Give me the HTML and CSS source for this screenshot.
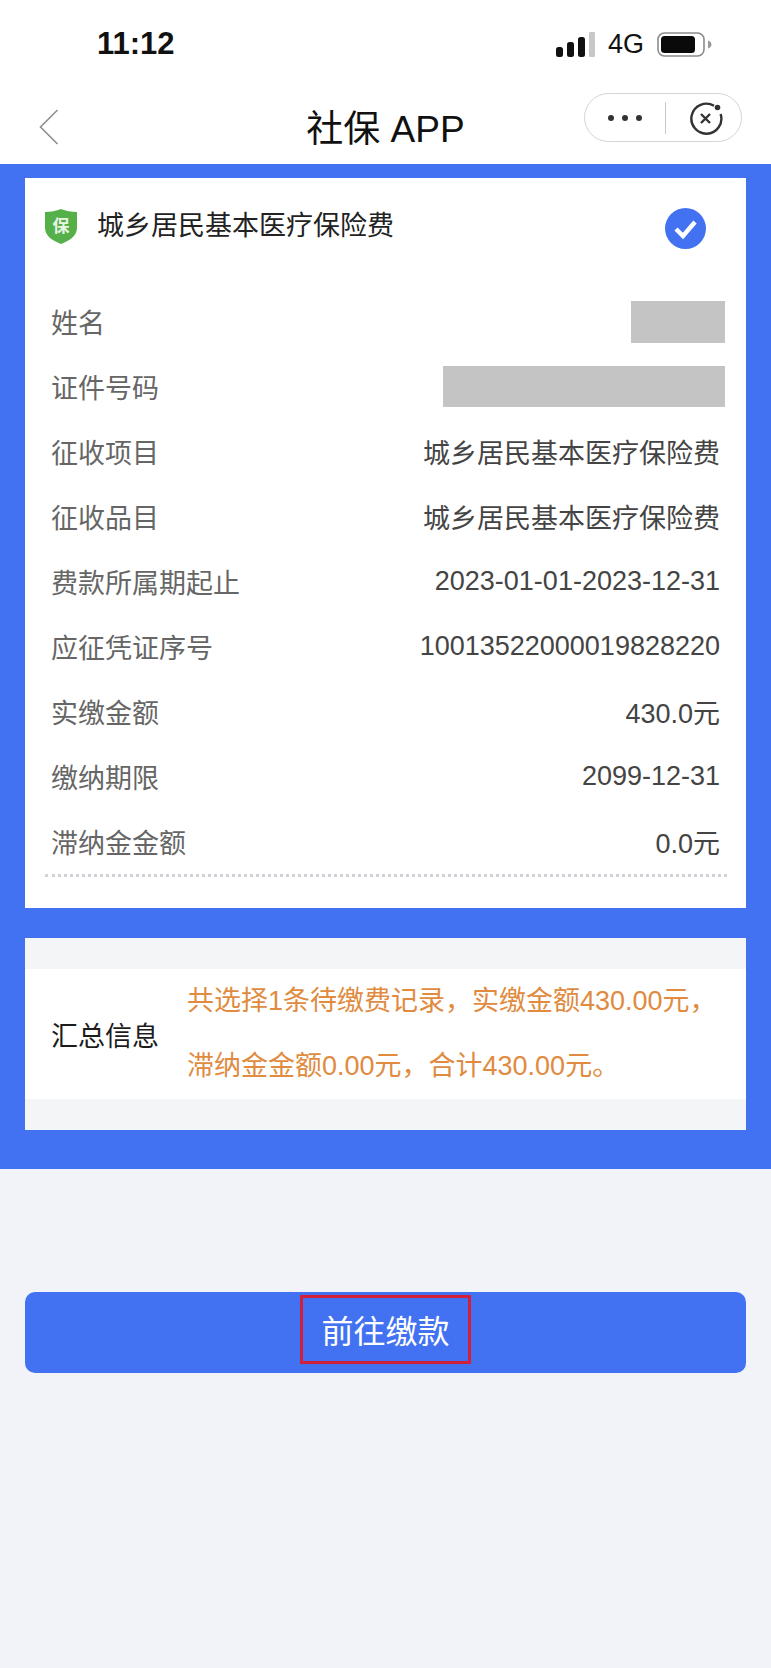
FILE: index.html
```html
<!DOCTYPE html>
<html lang="zh-CN">
<head>
    <meta charset="UTF-8">
    <meta name="viewport" content="width=device-width, initial-scale=1.0">
    <title>社保 APP</title>
    <link rel="stylesheet" href="styles.css">
</head>
<body>
    <div class="status-bar">
        <span class="time">11:12</span>
        <div class="status-right">
            <svg class="signal" width="39" height="25" viewBox="0 0 39 25">
                <rect x="0" y="15" width="7" height="10" rx="2.5" fill="#111"/>
                <rect x="11" y="10" width="7" height="15" rx="2.5" fill="#111"/>
                <rect x="22" y="5" width="7" height="20" rx="2.5" fill="#111"/>
                <rect x="33" y="0" width="6" height="25" rx="1" fill="#c8c8c8"/>
            </svg>
            <span class="network">4G</span>
            <svg class="battery" width="55" height="25" viewBox="0 0 55 25">
                <rect x="1" y="1" width="46" height="23" rx="6.5" fill="none" stroke="#8c8c8c" stroke-width="1.6"/>
                <rect x="4" y="4" width="34" height="17" rx="3.5" fill="#0a0a0a"/>
                <path d="M51 8.5 C53.5 9.5 54.5 11 54.5 12.5 C54.5 14 53.5 15.5 51 16.5 Z" fill="#999"/>
            </svg>
        </div>
    </div>

    <div class="nav-bar">
        <svg class="back" width="20" height="36" viewBox="0 0 20 36">
            <path d="M18.5 1 L1.5 18 L18.5 35" fill="none" stroke="#8e8e8e" stroke-width="1.6"/>
        </svg>
        <h1 class="nav-title">社保 APP</h1>
        <div class="capsule">
            <div class="capsule-dots"><i></i><i></i><i></i></div>
            <div class="capsule-line"></div>
            <svg class="capsule-close" width="36" height="36" viewBox="0 0 36 36">
                <path d="M26 5.8 A15 15 0 1 0 32.6 14" fill="none" stroke="#333" stroke-width="2.4"/>
                <circle cx="29.5" cy="7.5" r="2.8" fill="#333"/>
                <path d="M13 14 L22 23 M22 14 L13 23" stroke="#333" stroke-width="2.4" fill="none"/>
            </svg>
        </div>
    </div>

    <div class="blue-section">
        <div class="card">
            <div class="card-head">
                <svg class="shield" width="32" height="35" viewBox="0 0 32 35">
                    <path d="M16 0 C21 2 26 3 32 3 L32 19 C32 27 24 32 16 35 C8 32 0 27 0 19 L0 3 C6 3 11 2 16 0 Z" fill="#55b04a"/>
                    <text x="16" y="23" class="shield-text" text-anchor="middle">保</text>
                </svg>
                <span class="card-title">城乡居民基本医疗保险费</span>
                <svg class="check" width="41" height="41" viewBox="0 0 41 41">
                    <circle cx="20.5" cy="20.5" r="20.5" fill="#4272f2"/>
                    <path d="M11 21 L18 28 L30 14" fill="none" stroke="#fff" stroke-width="4.4"/>
                </svg>
            </div>
            <div class="rows">
                <div class="row"><span class="label">姓名</span><div class="mask mask-name"></div></div>
                <div class="row"><span class="label">证件号码</span><div class="mask mask-id"></div></div>
                <div class="row"><span class="label">征收项目</span><span class="value">城乡居民基本医疗保险费</span></div>
                <div class="row"><span class="label">征收品目</span><span class="value">城乡居民基本医疗保险费</span></div>
                <div class="row"><span class="label">费款所属期起止</span><span class="value">2023-01-01-2023-12-31</span></div>
                <div class="row"><span class="label">应征凭证序号</span><span class="value">10013522000019828220</span></div>
                <div class="row"><span class="label">实缴金额</span><span class="value">430.0元</span></div>
                <div class="row"><span class="label">缴纳期限</span><span class="value">2099-12-31</span></div>
                <div class="row"><span class="label">滞纳金金额</span><span class="value">0.0元</span></div>
            </div>
            <div class="dotted"></div>
        </div>

        <div class="summary-card">
            <div class="summary">
                <span class="summary-label">汇总信息</span>
                <p class="summary-text">共选择1条待缴费记录，实缴金额430.00元，<br>滞纳金金额0.00元，合计430.00元。</p>
            </div>
        </div>
    </div>

    <div class="pay-btn">
        <span class="pay-text">前往缴款</span>
    </div>
</body>
</html>
```

FILE: styles.css
```css
* {
    margin: 0;
    padding: 0;
    box-sizing: border-box;
}
body {
    font-family: "Liberation Sans", "Noto Sans CJK SC", sans-serif;
    background: #f1f3f8;
    color: #333;
    min-height: 100vh;
}
.status-bar {
    height: 88px;
    background: white;
    padding: 0 59px 0 97px;
    display: flex;
    justify-content: space-between;
    align-items: center;
}
.time {
    font-size: 31px;
    font-weight: bold;
    color: #111;
}
.status-right {
    display: flex;
    align-items: center;
}
.network {
    font-size: 27px;
    color: #111;
    margin: 0 13px;
}
.nav-bar {
    height: 76px;
    background: white;
    padding: 0 29px 0 39px;
    display: flex;
    justify-content: space-between;
    align-items: center;
    position: relative;
}
.back {
    margin-top: 2px;
}
.nav-title {
    position: absolute;
    left: 0;
    right: 0;
    text-align: center;
    font-size: 37px;
    font-weight: normal;
    color: #111;
    margin-top: 0;
}
.capsule {
    width: 158px;
    height: 49px;
    margin-top: -17px;
    border: 1px solid #d4d4d4;
    border-radius: 25px;
    display: flex;
    align-items: center;
    position: relative;
    z-index: 1;
}
.capsule-dots {
    display: flex;
    gap: 8px;
    margin-left: 23px;
}
.capsule-dots i {
    width: 6px;
    height: 6px;
    border-radius: 50%;
    background: #333;
}
.capsule-line {
    width: 1px;
    height: 32px;
    background: #c8c8c8;
    margin-left: 23px;
}
.capsule-close {
    margin-left: 22px;
}
.blue-section {
    background: #4272f2;
    padding: 14px 25px 39px;
}
.card {
    background: white;
    height: 730px;
}
.card-head {
    height: 111px;
    padding: 31px 40px 0 20px;
    display: flex;
    align-items: flex-start;
}
.shield-text {
    font-size: 17px;
    font-weight: bold;
    fill: #e8f5e4;
}
.card-title {
    font-size: 27px;
    line-height: 34px;
    color: #222;
    margin-left: 20px;
    flex: 1;
}
.check {
    margin-top: -1px;
}
.row {
    height: 65px;
    padding: 0 26px;
    display: flex;
    justify-content: space-between;
    align-items: center;
}
.label {
    font-size: 27px;
    color: #666;
}
.value {
    font-size: 27px;
    color: #444;
}
.mask {
    background: #c4c4c4;
    margin-right: -5px;
}
.mask-name {
    width: 94px;
    height: 42px;
}
.mask-id {
    width: 282px;
    height: 41px;
}
.dotted {
    margin: 0 19px 0 20px;
    border-top: 3px dotted #cfd2d6;
}
.summary-card {
    background: #f4f5f7;
    margin-top: 30px;
    padding: 31px 0;
}
.summary {
    background: white;
    height: 130px;
    padding-left: 26px;
    display: flex;
    align-items: center;
}
.summary-label {
    font-size: 27px;
    color: #1c1c1c;
    width: 136px;
    flex-shrink: 0;
}
.summary-text {
    font-size: 27px;
    line-height: 65px;
    color: #e08b40;
    white-space: nowrap;
}
.pay-btn {
    margin: 123px 25px 0;
    height: 81px;
    background: #4272f2;
    border-radius: 10px;
    display: flex;
    justify-content: center;
    padding-top: 3px;
}
.pay-text {
    width: 171px;
    height: 69px;
    border: 3px solid #d41f3a;
    font-size: 32px;
    line-height: 69px;
    color: white;
    text-align: center;
}
```
